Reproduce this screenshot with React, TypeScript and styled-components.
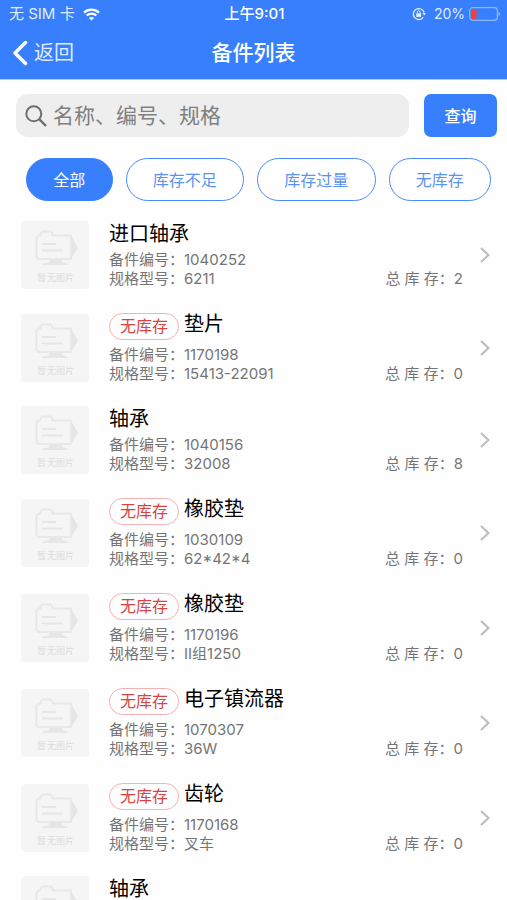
import React, { useState } from "react";
import styled, { createGlobalStyle } from "styled-components";

const blue = "#387ffe";

const GlobalStyle = createGlobalStyle`
  *, *::before, *::after { box-sizing: border-box; }
  html, body { margin: 0; background: #fefefe; }
  body, button, input {
    font-family: Inter, "Noto Sans CJK SC", sans-serif;
  }
`;

const Page = styled.div`
  display: flex;
  flex-direction: column;
  height: 100vh;
  color: #000;
`;

const Header = styled.header`
  flex: none;
  background: ${blue};
  color: #fff;
  border-bottom: 1px solid #a9cbff;
`;

const StatusBar = styled.div`
  display: grid;
  grid-template-columns: 1fr auto 1fr;
  align-items: center;
  height: 28px;
  padding: 0 7px 0 9px;
  font-size: 14px;
  line-height: 20px;
`;

const StatusGroup = styled.div<{ $end?: boolean }>`
  display: flex;
  align-items: center;
  justify-content: ${(p) => (p.$end ? "flex-end" : "flex-start")};
  gap: 8px;
`;

const Carrier = styled.span`
  opacity: 0.85;
  font-size: 15px;
`;

const Charge = styled.span`
  display: flex;
  align-items: center;
  gap: 4px;
  color: #e0ebff;
`;

const Clock = styled.time`
  font-size: 15px;
  font-weight: 500;
`;

const NavBar = styled.nav`
  display: grid;
  grid-template-columns: 1fr auto 1fr;
  align-items: center;
  height: 51px;
  padding: 0 12px 2px;
`;

const BackButton = styled.button`
  display: flex;
  align-items: center;
  justify-self: start;
  gap: 6px;
  padding: 0;
  border: 0;
  background: none;
  color: #dfeaff;
  font-size: 20px;
  line-height: 28px;
  cursor: pointer;
`;

const NavTitle = styled.h1`
  margin: 0;
  font-size: 21px;
  line-height: 28px;
  font-weight: 500;
`;

const Main = styled.main`
  flex: 1;
  min-height: 0;
  overflow-y: auto;
  scrollbar-width: none;
`;

const SearchForm = styled.form`
  display: flex;
  gap: 15px;
  padding: 14px 10px 0 16px;
`;

const SearchField = styled.label`
  display: flex;
  flex: 1;
  align-items: center;
  gap: 6px;
  min-width: 0;
  height: 43px;
  padding: 0 9px;
  border-radius: 12px;
  background: #eee;
`;

const SearchInput = styled.input`
  flex: 1;
  min-width: 0;
  padding: 0;
  border: 0;
  outline: 0;
  background: none;
  color: #333;
  font-size: 21px;
  line-height: 30px;
  &::placeholder {
    color: #808080;
    opacity: 1;
  }
`;

const SearchButton = styled.button`
  width: 73px;
  height: 43px;
  padding: 0 0 2px;
  border: 0;
  border-radius: 7px;
  background: ${blue};
  color: #fff;
  font-size: 16px;
  font-weight: 500;
  cursor: pointer;
`;

const Filters = styled.div`
  display: flex;
  gap: 13px;
  padding: 21px 16px 9px 26px;
`;

const FilterButton = styled.button<{ $active: boolean }>`
  flex: 1 1 auto;
  height: 43px;
  padding: 0 26px 2px;
  border: 1px solid ${(p) => (p.$active ? blue : "#4a89fa")};
  border-radius: 22px;
  background: ${(p) => (p.$active ? blue : "#fff")};
  color: ${(p) => (p.$active ? "#fff" : "#5b92f4")};
  font-size: 16px;
  white-space: nowrap;
  cursor: pointer;
`;

const List = styled.ul`
  margin: 0;
  padding: 0;
  list-style: none;
`;

const Row = styled.li`
  display: flex;
  align-items: center;
  padding: 11px 17px 11px 21px;
`;

const Thumb = styled.svg`
  flex: none;
  width: 68px;
  height: 68px;
  margin-right: 20px;
`;

const Details = styled.div`
  flex: 1;
  min-width: 0;
  padding: 2px 0 1px;
`;

const Heading = styled.div`
  display: flex;
  align-items: flex-start;
  gap: 5px;
  margin-bottom: 4px;
`;

const Badge = styled.span`
  flex: none;
  margin-bottom: 1px;
  padding: 0 10px;
  border: 1px solid #f7b0b0;
  border-radius: 14px;
  color: #d64541;
  font-size: 16px;
  line-height: 25px;
`;

const Name = styled.h2`
  margin: 0;
  font-size: 20px;
  line-height: 23px;
  font-weight: 400;
`;

const Line = styled.div`
  display: flex;
  justify-content: space-between;
  color: #757575;
  font-size: 15px;
  line-height: 19px;
`;

const Arrow = styled.svg`
  flex: none;
  margin-left: 17px;
`;

function WifiIcon() {
  return (
    <svg width="17" height="13" viewBox="0 0 17 13" fill="none" stroke="#fff" strokeWidth="2.2" aria-hidden="true">
      <path d="M1 4.6C5.2.6 11.8.6 16 4.6" />
      <path d="M3.7 7.5c2.7-2.5 6.9-2.5 9.6 0" />
      <path d="M8.5 12.6 5.9 9.9c1.5-1.3 3.7-1.3 5.2 0z" fill="#fff" stroke="none" />
    </svg>
  );
}

function RotationLockIcon() {
  return (
    <svg width="14" height="14" viewBox="0 0 14 14" fill="none" stroke="#e4eeff" aria-hidden="true">
      <path d="M11.2 10.4A5.5 5.5 0 1 1 12.1 5.5" strokeWidth="1.3" />
      <path d="M10.3 6h3.6l-1.7 2.6z" fill="#e4eeff" stroke="none" />
      <rect x="4.3" y="6.3" width="4.8" height="3.7" rx=".5" fill="#e4eeff" stroke="none" />
      <path d="M5.300 6.500V5.200a1.400 1.400 0 0 1 2.800 0v1.300" />
    </svg>
  );
}

function BatteryIcon() {
  return (
    <svg width="31" height="14" viewBox="0 0 31 14" fill="none" aria-hidden="true">
      <rect x=".7" y=".7" width="27.600" height="12.600" rx="3" stroke="#8fb7ff" strokeWidth="1.200" />
      <rect x="2" y="2" width="5.500" height="10" rx="1.500" fill="#f5403a" />
      <path d="M29.500 4.700c2 .8 2 3.800 0 4.600z" fill="#8fb7ff" />
    </svg>
  );
}

function Placeholder() {
  return (
    <Thumb viewBox="0 0 68 68" role="img" aria-label="暂无图片">
      <rect width="68" height="68" rx="4" fill="#f5f5f5" />
      <path d="M50 14.500 57 27l-7 11z" fill="#e5e5e5" />
      <path
        d="M17.500 14.500h2v-2l2-2h8l2 2v2h18.500v23.500H17.500l-2-2V16.500z"
        fill="#f5f5f5"
        stroke="#e8e8e8"
        strokeWidth="2"
        strokeLinejoin="round"
      />
      <path d="M21 23h14M21 29.500h21" stroke="#e6e6e6" strokeWidth="1.800" />
      <path d="M28 39h13v2l6 2v1H21v-1l7-2z" fill="#e6e6e6" />
      <text x="16 26 35 44" y="60" fill="#dcdcdc" fontSize="9">
        暂无图片
      </text>
    </Thumb>
  );
}

interface Part {
  name: string;
  code: string;
  model: string;
  stock: number;
}

const parts: Part[] = [
  { name: "进口轴承", code: "1040252", model: "6211", stock: 2 },
  { name: "垫片", code: "1170198", model: "15413-22091", stock: 0 },
  { name: "轴承", code: "1040156", model: "32008", stock: 8 },
  { name: "橡胶垫", code: "1030109", model: "62*42*4", stock: 0 },
  { name: "橡胶垫", code: "1170196", model: "II组1250", stock: 0 },
  { name: "电子镇流器", code: "1070307", model: "36W", stock: 0 },
  { name: "齿轮", code: "1170168", model: "叉车", stock: 0 },
  { name: "轴承", code: "1040157", model: "32009", stock: 4 },
];

const filters = ["全部", "库存不足", "库存过量", "无库存"];

function PartRow({ part }: { part: Part }) {
  return (
    <Row>
      <Placeholder />
      <Details>
        <Heading>
          {part.stock === 0 && <Badge>无库存</Badge>}
          <Name>{part.name}</Name>
        </Heading>
        <Line>备件编号：{part.code}</Line>
        <Line>
          <span>规格型号：{part.model}</span>
          <span>总 库 存：{part.stock}</span>
        </Line>
      </Details>
      <Arrow width="10" height="16" viewBox="0 0 10 16" fill="none" stroke="#bcbcbc" strokeWidth="2" aria-hidden="true">
        <path d="m1 1 7.500 7L1 15" />
      </Arrow>
    </Row>
  );
}

export default function App() {
  const [active, setActive] = useState(filters[0]);
  return (
    <Page>
      <GlobalStyle />
      <Header>
        <StatusBar>
          <StatusGroup>
            <Carrier>无 SIM 卡</Carrier>
            <WifiIcon />
          </StatusGroup>
          <Clock>上午9:01</Clock>
          <StatusGroup $end>
            <RotationLockIcon />
            <Charge>
              20%
              <BatteryIcon />
            </Charge>
          </StatusGroup>
        </StatusBar>
        <NavBar>
          <BackButton type="button">
            <svg width="16" height="26" viewBox="0 0 16 26" fill="none" stroke="#fff" strokeWidth="3.500" strokeLinecap="round" strokeLinejoin="round" aria-hidden="true">
              <path d="M13.500 2.500 3 13l10.500 10.500" />
            </svg>
            返回
          </BackButton>
          <NavTitle>备件列表</NavTitle>
        </NavBar>
      </Header>
      <Main>
        <SearchForm onSubmit={(e) => e.preventDefault()}>
          <SearchField>
            <svg width="22" height="22" viewBox="0 0 22 22" fill="none" stroke="#6e6e6e" strokeWidth="2" aria-hidden="true">
              <circle cx="8.800" cy="8.800" r="7.500" />
              <path d="m14.200 14.200 6.800 6.800" strokeWidth="2.400" />
            </svg>
            <SearchInput type="text" aria-label="搜索备件" placeholder="名称、编号、规格" />
          </SearchField>
          <SearchButton type="submit">查询</SearchButton>
        </SearchForm>
        <Filters>
          {filters.map((label) => (
            <FilterButton
              key={label}
              type="button"
              $active={label === active}
              aria-pressed={label === active}
              onClick={() => setActive(label)}
            >
              {label}
            </FilterButton>
          ))}
        </Filters>
        <List>
          {parts.map((part) => (
            <PartRow key={part.code} part={part} />
          ))}
        </List>
      </Main>
    </Page>
  );
}
